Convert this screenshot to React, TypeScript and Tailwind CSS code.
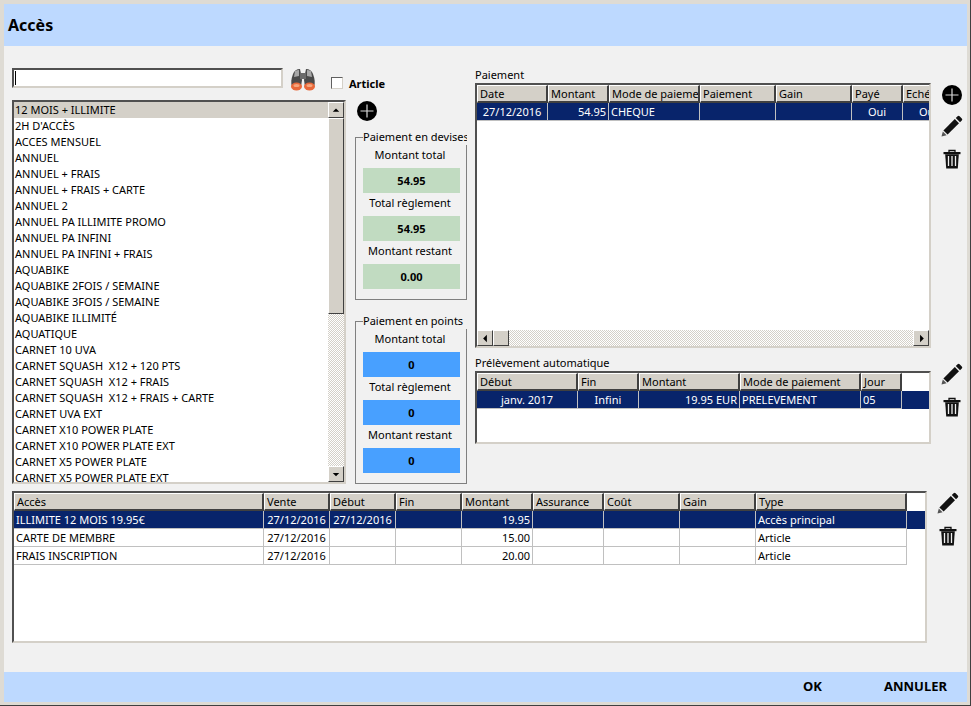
import React from 'react';

const accessItems = [
  '12 MOIS + ILLIMITE',
  "2H D'ACCÈS",
  'ACCES MENSUEL',
  'ANNUEL',
  'ANNUEL + FRAIS',
  'ANNUEL + FRAIS + CARTE',
  'ANNUEL 2',
  'ANNUEL PA ILLIMITE PROMO',
  'ANNUEL PA INFINI',
  'ANNUEL PA INFINI + FRAIS',
  'AQUABIKE',
  'AQUABIKE 2FOIS / SEMAINE',
  'AQUABIKE 3FOIS / SEMAINE',
  'AQUABIKE ILLIMITÉ',
  'AQUATIQUE',
  'CARNET 10 UVA',
  'CARNET SQUASH  X12 + 120 PTS',
  'CARNET SQUASH  X12 + FRAIS',
  'CARNET SQUASH  X12 + FRAIS + CARTE',
  'CARNET UVA EXT',
  'CARNET X10 POWER PLATE',
  'CARNET X10 POWER PLATE EXT',
  'CARNET X5 POWER PLATE',
  'CARNET X5 POWER PLATE EXT',
];

interface Column {
  title: string;
  width: number;
  align?: 'left' | 'right' | 'center';
}

interface GridProps {
  columns: Column[];
  rows: string[][];
}

const alignClass = { left: 'text-left', right: 'text-right', center: 'text-center' };

const Grid: React.FC<GridProps> = ({ columns, rows }) => (
  <div className="flex flex-col">
    <div className="flex h-[18px] shrink-0">
      {columns.map((c) => (
        <div
          key={c.title}
          style={{ width: c.width }}
          className="h-[18px] shrink-0 overflow-hidden whitespace-nowrap border-t border-l border-t-white border-l-white border-r-2 border-b-2 border-r-[#404040] border-b-[#404040] bg-[#d4d0c8] pl-[2px] leading-[15px]"
        >
          {c.title}
        </div>
      ))}
    </div>
    {rows.map((row, i) => (
      <div key={i} className={i === 0 ? 'flex h-[18px] bg-[#08246b] text-white' : 'flex h-[18px] bg-white'}>
        {row.map((cell, j) => (
          <div
            key={j}
            style={{ width: columns[j].width }}
            className={`h-[18px] shrink-0 overflow-hidden whitespace-nowrap border-r border-b border-[#c0c0c0] px-[2px] leading-[17px] ${alignClass[columns[j].align ?? 'left']}`}
          >
            {cell}
          </div>
        ))}
      </div>
    ))}
  </div>
);

const PlusIcon = () => (
  <svg width="20" height="20" viewBox="0 0 20 20" className="block">
    <circle cx="10" cy="10" r="10" fill="#000" />
    <path d="M10 3.5v13M3.5 10h13" stroke="#d8d8d8" strokeWidth="1.2" />
  </svg>
);

const PencilIcon = () => (
  <svg width="22" height="22" viewBox="0 0 22 22" className="block">
    <path d="M16.6 1.2a1.4 1.4 0 0 1 2 0l2.2 2.2a1.4 1.4 0 0 1 0 2L19 7.200 14.800 3z" fill="#111" />
    <path d="M13.800 4 18 8.200 6.600 19.600 2.400 15.400z" fill="#111" />
    <path d="M1.800 16.400 5.600 20.200 0.500 21.500z" fill="#555" />
  </svg>
);

const TrashIcon = () => (
  <svg width="18" height="20" viewBox="0 0 18 20" className="block">
    <path d="M6 3V1.500h6V3" fill="none" stroke="#111" strokeWidth="1.300" />
    <path d="M0.500 3h17v2.200H0.500z" fill="#111" />
    <path d="M2.200 5.200 3.200 19.500h11.600l1-14.300z" fill="#111" />
    <path d="M5.500 7v10M9 7v10M12.500 7v10" stroke="#f1f1f1" strokeWidth="1.300" />
  </svg>
);

const BinocularsIcon = () => (
  <svg width="26" height="24" viewBox="0 0 26 24" className="block">
    <path d="M3 6 Q5 1 10 1 L11 6 L12 12 L11 19 L2 19 Q0 14 3 6z" fill="#4a4a4a" />
    <path d="M23 6 Q21 1 16 1 L15 6 L14 12 L15 19 L24 19 Q26 14 23 6z" fill="#4a4a4a" />
    <path d="M5 3 Q7 2 9 2 L9 8 L4 9z" fill="#a8a8a8" />
    <path d="M21 3 Q19 2 17 2 L17 8 L22 9z" fill="#a8a8a8" />
    <rect x="10" y="5" width="6" height="6" fill="#6b6b6b" />
    <ellipse cx="6.500" cy="18.500" rx="5.500" ry="4" fill="#e8683a" />
    <ellipse cx="19.500" cy="18.500" rx="5.500" ry="4" fill="#e8683a" />
    <ellipse cx="6.500" cy="17.500" rx="3" ry="1.500" fill="#f6a57c" />
    <ellipse cx="19.500" cy="17.500" rx="3" ry="1.500" fill="#f6a57c" />
  </svg>
);

const ScrollButton = ({ dir }: { dir: 'up' | 'down' | 'left' | 'right' }) => {
  const points = {
    up: 'M4 9.500h7L7.500 6z',
    down: 'M4 6.500h7L7.500 10z',
    left: 'M9.500 4v8L5.500 8z',
    right: 'M6.500 4v8l4-4z',
  }[dir];
  return (
    <div className="h-4 w-4 shrink-0 border border-t-white border-l-white border-r-[#404040] border-b-[#404040] bg-[#d4d0c8]">
      <svg width="14" height="14" viewBox="0 0 15 15" className="block">
        <path d={points} fill="#000" />
      </svg>
    </div>
  );
};

const trackClass =
  'flex-1 bg-[repeating-conic-gradient(#d4d0c8_0_25%,#ffffff_0_50%)] bg-[length:2px_2px]';

const Amount = ({ label, value, blue }: { label: string; value: string; blue?: boolean }) => (
  <div className="flex flex-col">
    <div className="h-[23px] pr-[2px] text-center leading-[19px]">{label}</div>
    <div
      className={`ml-[7px] h-[25px] w-[97px] text-center font-bold leading-[25px] ${
        blue ? 'bg-[#48a0ff]' : 'bg-[#c1dbc1]'
      }`}
    >
      {value}
    </div>
  </div>
);

const AmountGroup = ({ title, values, blue }: { title: string; values: string[]; blue?: boolean }) => (
  <div className="h-[170px] w-[112px] overflow-hidden pt-[7px]">
    <div className="h-[163px] w-[112px] border border-[#808080]">
      <div className="-mt-[9px] ml-[7px] w-[110px] whitespace-nowrap bg-[#f1f1f1] leading-[16px]">{title}</div>
      <Amount label="Montant total" value={values[0]} blue={blue} />
      <Amount label="Total règlement" value={values[1]} blue={blue} />
      <Amount label="Montant restant" value={values[2]} blue={blue} />
    </div>
  </div>
);

const paymentColumns: Column[] = [
  { title: 'Date', width: 71, align: 'center' },
  { title: 'Montant', width: 61, align: 'right' },
  { title: 'Mode de paiement', width: 91 },
  { title: 'Paiement', width: 76 },
  { title: 'Gain', width: 76 },
  { title: 'Payé', width: 51, align: 'center' },
  { title: 'Echéance', width: 51, align: 'center' },
];

const debitColumns: Column[] = [
  { title: 'Début', width: 101, align: 'center' },
  { title: 'Fin', width: 61, align: 'center' },
  { title: 'Montant', width: 101, align: 'right' },
  { title: 'Mode de paiement', width: 121 },
  { title: 'Jour', width: 41 },
];

const saleColumns: Column[] = [
  { title: 'Accès', width: 250 },
  { title: 'Vente', width: 66, align: 'center' },
  { title: 'Début', width: 66, align: 'center' },
  { title: 'Fin', width: 66, align: 'center' },
  { title: 'Montant', width: 71, align: 'right' },
  { title: 'Assurance', width: 71 },
  { title: 'Coût', width: 76 },
  { title: 'Gain', width: 76 },
  { title: 'Type', width: 151 },
];

const sunken = 'border-2 border-t-[#505050] border-l-[#505050] border-r-[#d4d0c8] border-b-[#d4d0c8] bg-white';

export default function App() {
  return (
    <div
      className="h-[706px] w-[971px] overflow-hidden border-r border-b border-r-[#404040] border-b-[#404040] bg-[#d4d0c8] text-[11px] text-black [font-family:'Noto_Sans',sans-serif]"
    >
      <div className="flex h-[705px] w-[970px] flex-col border-t-[4px] border-l-[4px] border-r-[3px] border-b-[3px] border-[#dedbd4] bg-[#f1f1f1]">
        <div className="flex h-[42px] shrink-0 items-center bg-[#bdd9ff] pl-[4px] pb-[1px] text-[16px] font-bold">Accès</div>

        <div className="flex flex-1 flex-col px-[8px] pt-[21px]">
          <div className="flex h-[417px]">
            {/* liste des accès */}
            <div className="flex w-[334px] flex-col pt-[1px]">
              <div className="flex h-[32px] items-start">
                <div className={`h-[20px] w-[271px] ${sunken} flex items-center pl-[1px]`}>
                  <div className="h-[14px] w-px bg-black" />
                </div>
                <div className="ml-[7px]"><BinocularsIcon /></div>
              </div>
              <div className={`flex h-[384px] w-[334px] ${sunken}`}>
                <div className="flex-1 overflow-hidden">
                  {accessItems.map((item, i) => (
                    <div key={item} className={`h-4 whitespace-pre pl-[1px] leading-[16px] ${i === 0 ? 'bg-[#d4d0c8]' : ''}`}>
                      {item}
                    </div>
                  ))}
                </div>
                <div className="flex w-4 flex-col">
                  <ScrollButton dir="up" />
                  <div className="h-[196px] border border-t-white border-l-white border-r-[#404040] border-b-[#404040] bg-[#d4d0c8]" />
                  <div className={trackClass} />
                  <ScrollButton dir="down" />
                </div>
              </div>
            </div>

            {/* montants */}
            <div className="ml-[9px] flex w-[112px] flex-col">
              <div className="-ml-[24px] flex h-[24px] items-center pt-[8px]">
                <div className="h-[12px] w-[12px] border border-t-[#606060] border-l-[#606060] border-r-[#d4d0c8] border-b-[#d4d0c8] bg-white" />
                <div className="ml-[6px] font-bold leading-none">Article</div>
              </div>
              <div className="ml-[2px] mt-[10px] h-[29px]"><PlusIcon /></div>
              <AmountGroup title="Paiement en devises" values={['54.95', '54.95', '0.00']} />
              <div className="h-[14px]" />
              <AmountGroup title="Paiement en points" values={['0', '0', '0']} blue />
            </div>

            {/* paiements */}
            <div className="ml-[8px] flex w-[456px] flex-col">
              <div className="h-[16px] leading-[15px]">Paiement</div>
              <div className={`flex h-[265px] flex-col overflow-hidden ${sunken}`}>
                <div className="flex-1 overflow-hidden">
                  <Grid
                    columns={paymentColumns}
                    rows={[['27/12/2016', '54.95', 'CHEQUE', '', '', 'Oui', 'Oui']]}
                  />
                </div>
                <div className="flex h-4 shrink-0">
                  <ScrollButton dir="left" />
                  <div className="h-4 w-4 border border-t-white border-l-white border-r-[#404040] border-b-[#404040] bg-[#d4d0c8]" />
                  <div className={trackClass} />
                  <ScrollButton dir="right" />
                </div>
              </div>
              <div className="mt-[7px] h-[16px] leading-[15px]">Prélèvement automatique</div>
              <div className={`h-[73px] ${sunken}`}>
                <Grid
                  columns={debitColumns}
                  rows={[['janv. 2017', 'Infini', '19.95 EUR', 'PRELEVEMENT', '05']]}
                />
              </div>
            </div>

            {/* actions */}
            <div className="ml-[10px] flex w-[22px] flex-col items-center">
              <div className="mt-[18px]"><PlusIcon /></div>
              <div className="mt-[10px]"><PencilIcon /></div>
              <div className="mt-[12px]"><TrashIcon /></div>
              <div className="mt-[194px]"><PencilIcon /></div>
              <div className="mt-[12px]"><TrashIcon /></div>
            </div>
          </div>

          <div className="mt-[7px] flex">
            <div className={`h-[152px] w-[919px] ${sunken}`}>
              <Grid
                columns={saleColumns}
                rows={[
                  ['ILLIMITE 12 MOIS 19.95€', '27/12/2016', '27/12/2016', '', '19.95', '', '', '', 'Accès principal'],
                  ['CARTE DE MEMBRE', '27/12/2016', '', '', '15.00', '', '', '', 'Article'],
                  ['FRAIS INSCRIPTION', '27/12/2016', '', '', '20.00', '', '', '', 'Article'],
                ]}
              />
            </div>
            <div className="ml-[10px] flex w-[22px] flex-col items-center pt-[1px]">
              <PencilIcon />
              <div className="mt-[12px]"><TrashIcon /></div>
            </div>
          </div>
        </div>

        <div className="flex h-[30px] shrink-0 items-center justify-end bg-[#bdd9ff] pr-[20px] text-[13px] font-bold">
          <span>OK</span>
          <span className="ml-[62px]">ANNULER</span>
        </div>
      </div>
    </div>
  );
}
